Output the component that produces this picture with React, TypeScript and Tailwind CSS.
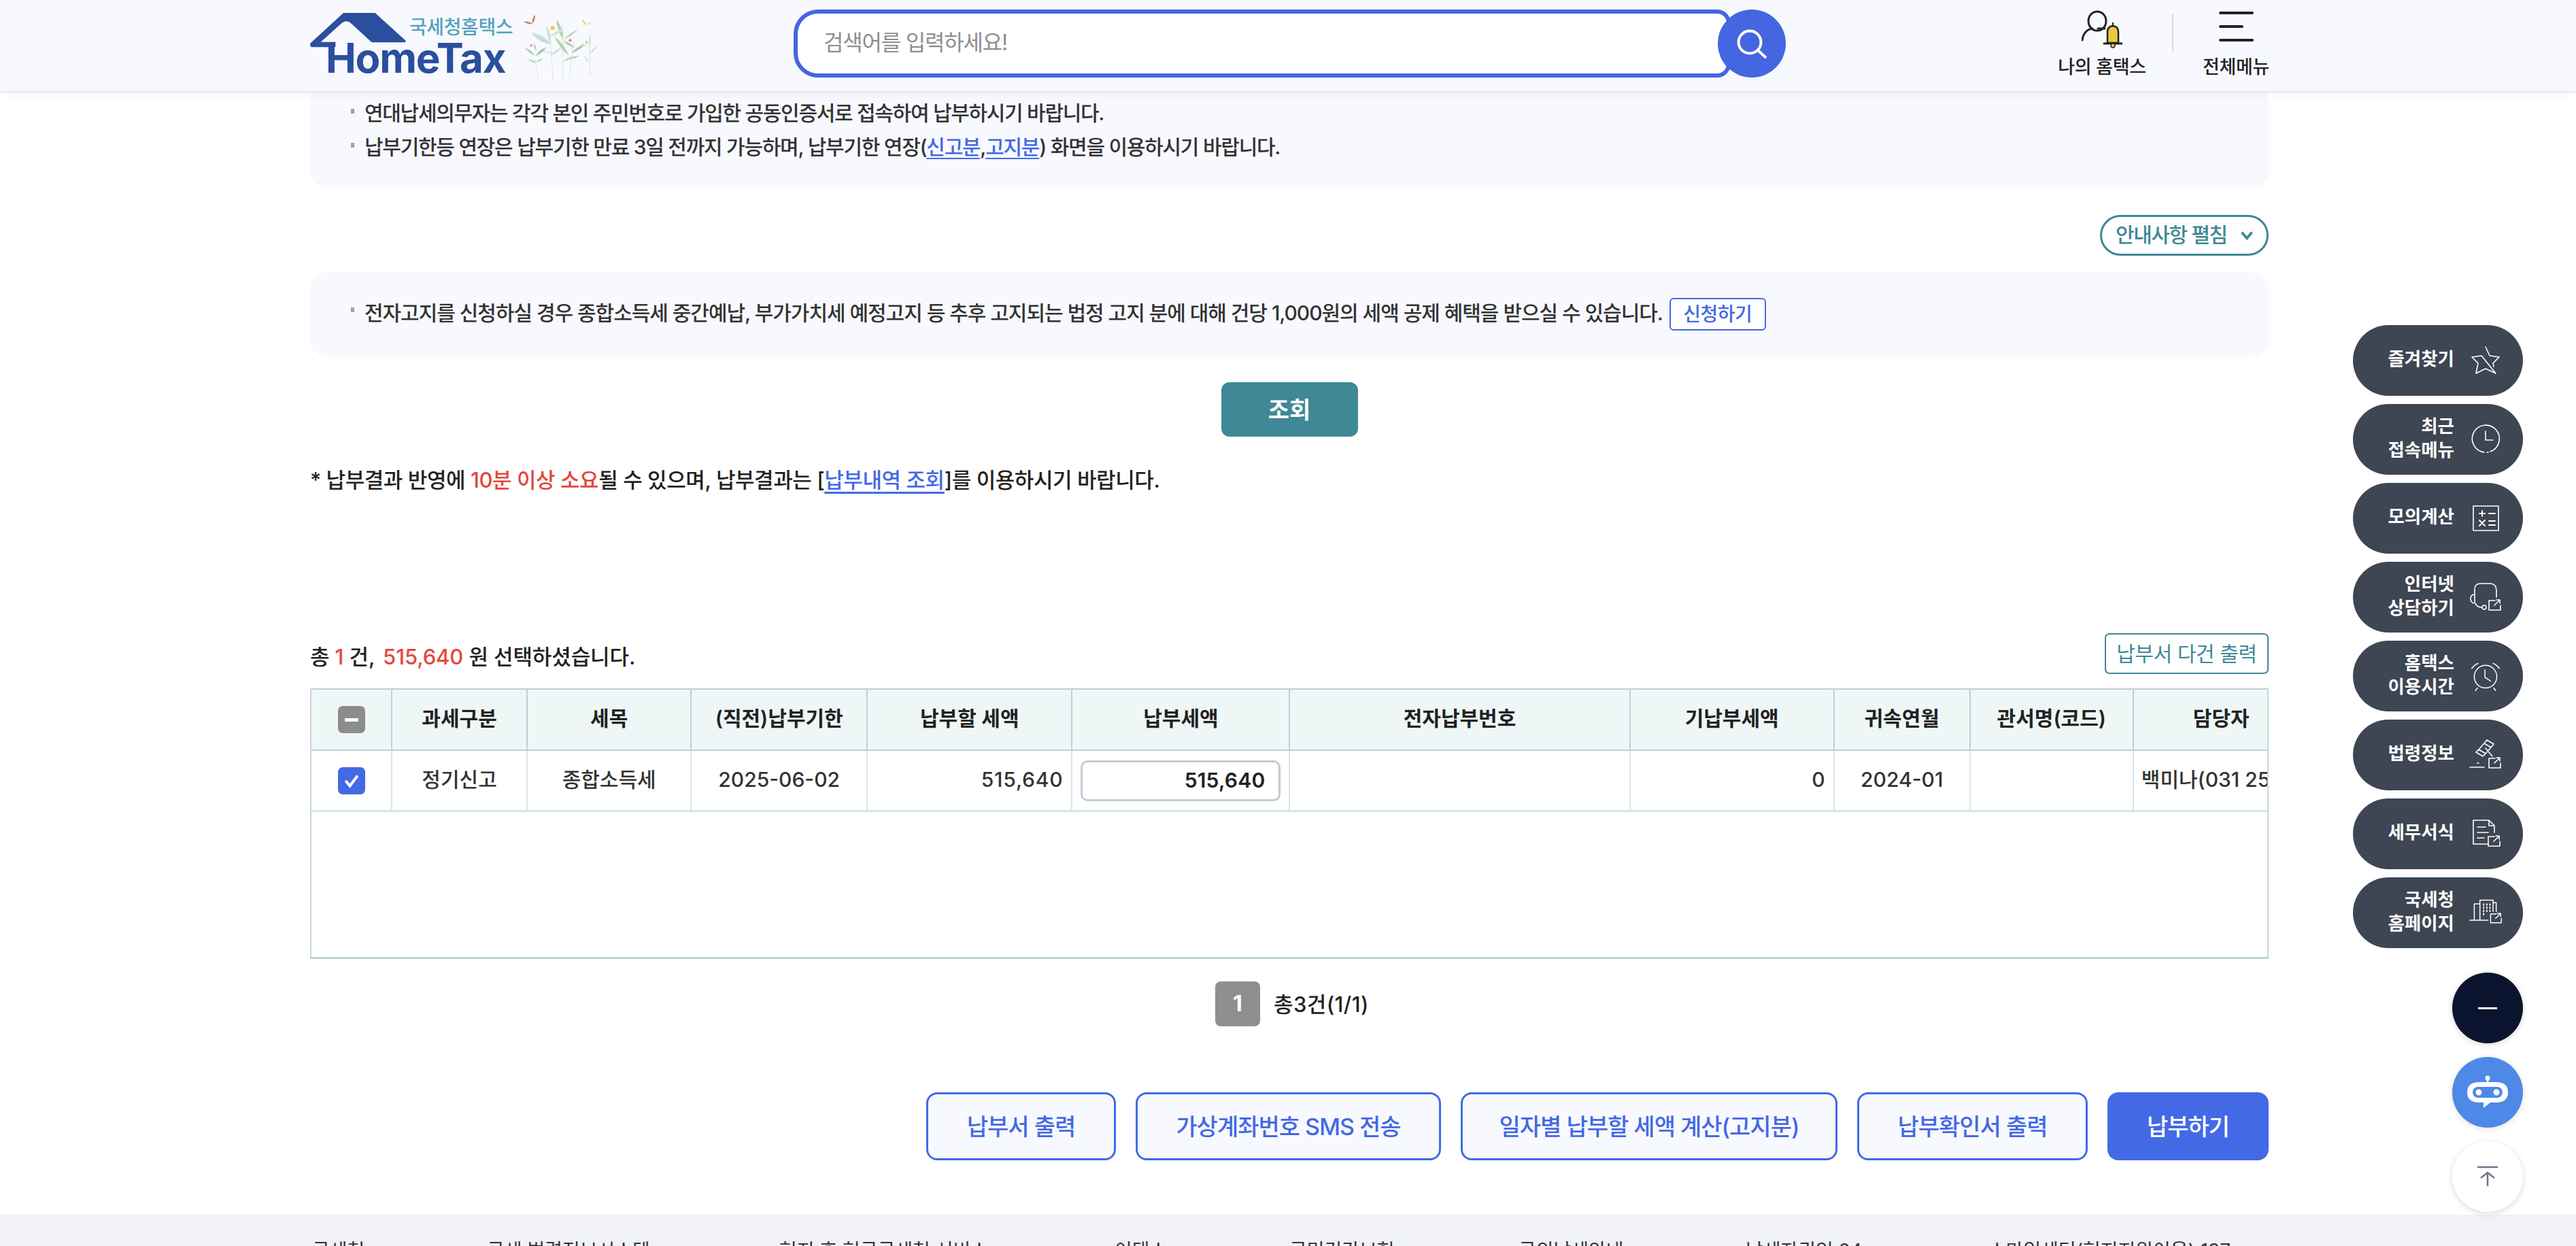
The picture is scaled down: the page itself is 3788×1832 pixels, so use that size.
import React from "react";

const FONT = "font-['Inter','Noto_Sans_CJK_KR','Noto_Sans',sans-serif]";

function Leaf({ a, b, w = 16, fill }: { a: [number, number]; b: [number, number]; w?: number; fill: string }) {
  const mx = (a[0] + b[0]) / 2;
  const my = (a[1] + b[1]) / 2;
  const dx = b[0] - a[0];
  const dy = b[1] - a[1];
  const len = Math.hypot(dx, dy) || 1;
  const px = (-dy / len) * w;
  const py = (dx / len) * w;
  return <path d={`M${a[0]} ${a[1]} Q${mx + px} ${my + py} ${b[0]} ${b[1]} Q${mx - px} ${my - py} ${a[0]} ${a[1]}Z`} fill={fill} />;
}

function Logo() {
  return (
    <div className="relative w-[424px] h-[100px] shrink-0">
      <svg viewBox="18 27 1272 300" className="absolute left-0 top-0 w-[424px] h-[100px]">
        <path d="M165 27 H305 L438 148 Q443 157 435 157 H290 L195 70 Q178 58 160 70 L65 155 H130 V178 H24 Q12 168 22 158 Z" fill="#2b4f9e" />
        <path d="M1010 230 L1025 320 M1075 100 L1090 325 M1132 70 V325 M1180 150 L1162 310 M1250 150 L1255 305" stroke="#d5e6df" strokeWidth="3" fill="none" />
        <Leaf a={[995, 115]} b={[1080, 165]} w={22} fill="#c3e0da" />
        <Leaf a={[1060, 80]} b={[1080, 165]} w={14} fill="#cbe3df" />
        <Leaf a={[1105, 55]} b={[1135, 145]} w={16} fill="#b7d4a8" />
        <Leaf a={[1140, 95]} b={[1070, 135]} w={12} fill="#cfe6e1" />
        <Leaf a={[1200, 100]} b={[1135, 145]} w={10} fill="#c4dcb0" />
        <Leaf a={[1095, 130]} b={[1160, 215]} w={14} fill="#b5d4a0" />
        <Leaf a={[1135, 150]} b={[1185, 180]} w={10} fill="#a6d0ad" />
        <Leaf a={[1230, 165]} b={[1170, 205]} w={12} fill="#9fcfa8" />
        <Leaf a={[1130, 180]} b={[1080, 212]} w={10} fill="#cfe5de" />
        <Leaf a={[1030, 190]} b={[1105, 210]} w={8} fill="#d3e8e2" />
        <Leaf a={[1060, 178]} b={[1012, 218]} w={11} fill="#9cc9a5" />
        <Leaf a={[965, 180]} b={[1010, 215]} w={9} fill="#a9d0a8" />
        <Leaf a={[1005, 160]} b={[1015, 195]} w={7} fill="#a9d0a8" />
        <Leaf a={[980, 232]} b={[1015, 248]} w={7} fill="#a9d0b0" />
        <Leaf a={[1045, 228]} b={[1015, 245]} w={6} fill="#a9d0b0" />
        <Leaf a={[1180, 220]} b={[1135, 240]} w={8} fill="#bcd7a8" />
        <Leaf a={[1205, 215]} b={[1165, 230]} w={6} fill="#a6d0ad" />
        <Leaf a={[1255, 120]} b={[1250, 180]} w={10} fill="#d0e6e1" />
        <Leaf a={[1205, 155]} b={[1250, 180]} w={5} fill="#d0e6e1" />
        <Leaf a={[1290, 165]} b={[1250, 210]} w={8} fill="#d0e6e1" />
        <Leaf a={[1225, 215]} b={[1250, 248]} w={7} fill="#d0e6e1" />
        <Leaf a={[960, 65]} b={[1000, 76]} w={8} fill="#cf7f5c" />
        <Leaf a={[1011, 35]} b={[998, 74]} w={9} fill="#cf7f5c" />
        <Leaf a={[1218, 55]} b={[1236, 82]} w={6} fill="#ecc84c" />
        <Leaf a={[1258, 66]} b={[1238, 81]} w={4} fill="#ecc84c" />
        <circle cx="1088" cy="93" r="9" fill="#edc84a" />
        <circle cx="1165" cy="148" r="6" fill="#d9835a" />
        <circle cx="993" cy="170" r="6" fill="#c9a9c9" />
        <circle cx="1238" cy="157" r="6" fill="#edd04a" />
      </svg>
      <span className="absolute left-[146px] top-[6px] text-[28px] leading-[30px] font-medium tracking-[-0.4px] text-[#54a2bd]">국세청홈택스</span>
      <span className="absolute left-[23px] top-[36px] text-[60px] leading-[60px] font-bold tracking-[-1.2px] text-[#2b4f9e]">HomeTax</span>
    </div>
  );
}

function SearchBar() {
  return (
    <div className="ml-[287px] mt-[-4px] flex items-center">
      <div className="w-[1378px] h-[100px] border-[6px] border-[#4466e0] rounded-l-[36px] rounded-r-[20px] bg-white flex items-center pl-[38px] text-[32px] tracking-[-1.2px] text-[#8e8e8e]">
        <span className="-mt-[2px]">검색어를 입력하세요!</span>
      </div>
      <div className="-ml-[19px] relative w-[100px] h-[100px] rounded-full bg-[#4466e0]">
        <svg viewBox="0 0 100 100" className="w-[100px] h-[100px]" fill="none" stroke="#fff" strokeWidth="4">
          <circle cx="47" cy="48" r="16.5" />
          <path d="M59 60 L71 71" />
        </svg>
      </div>
    </div>
  );
}

function Header() {
  return (
    <header className="relative z-10 h-[136px] bg-[#f8f9fe] border-b-[2px] border-[#e4e4ea] shadow-[0_4px_12px_rgba(0,0,0,0.03)] flex items-center pl-[456px] pb-[2px]">
      <div className="mt-[6px]"><Logo /></div>
      <SearchBar />
      <div className="flex items-start ml-auto mr-[452px] pb-[2px]">
        <div className="flex flex-col items-center w-[130px]">
          <svg viewBox="0 0 60 56" className="w-[60px] h-[56px]" fill="none">
            <ellipse cx="23" cy="16" rx="13" ry="14" stroke="#222" strokeWidth="3" />
            <path d="M1 44 C2 34 8 28 16 27 M24 27 L34 27" stroke="#222" strokeWidth="3" strokeLinecap="round" />
            <path d="M38 48 V32 Q38 24 46 23 Q54 24 54 32 V48 Z" fill="#ecc93d" stroke="#222" strokeWidth="2.5" />
            <path d="M33 49 H59" stroke="#222" strokeWidth="3" strokeLinecap="round" />
            <circle cx="46" cy="52" r="3" fill="#ecc93d" stroke="#222" strokeWidth="1.5" />
            <path d="M46 18 V23" stroke="#222" strokeWidth="2" />
          </svg>
          <span className="mt-[12px] text-[27px] leading-[32px] tracking-[-0.3px] text-[#222] whitespace-nowrap font-medium">나의 홈택스</span>
        </div>
        <div className="w-[2px] h-[54px] bg-[#d6d6dc] ml-[38px] mt-[6px]" />
        <div className="flex flex-col items-center ml-[44px] w-[96px]">
          <div className="w-[51px] h-[44px] mt-[2px] flex flex-col justify-between">
            <div className="h-[4px] w-[51px] bg-[#222] rounded-full" />
            <div className="h-[4px] w-[36px] bg-[#222] rounded-full" />
            <div className="h-[4px] w-[51px] bg-[#222] rounded-full" />
          </div>
          <span className="mt-[22px] text-[27px] leading-[32px] tracking-[-0.3px] text-[#222] whitespace-nowrap font-medium">전체메뉴</span>
        </div>
      </div>
    </header>
  );
}

const A = ({ children }: { children: React.ReactNode }) => (
  <span className="text-[#4469e5] underline underline-offset-[5px] decoration-[2px]">{children}</span>
);

const cols = [119, 199, 241, 259, 301, 320, 500, 300, 200, 240, 400];
const heads = ["", "과세구분", "세목", "(직전)납부기한", "납부할 세액", "납부세액", "전자납부번호", "기납부세액", "귀속연월", "관서명(코드)", "담당자"];
const thBase = "h-[92px] border-y-[2px] border-r-[2px] border-[#b9d2d9] text-[30px] font-semibold text-[#222]";
const tdBase = "h-[90px] border-b-[3px] border-r-[2px] border-b-[#d2e5ea] border-r-[#d5e6ea]";

function PayTable() {
  return (
    <div className="mt-[21px] h-[398px] border-x-[2px] border-b-[3px] border-x-[#c4d9de] border-b-[#b9d2d9] overflow-hidden">
      <table className="table-fixed border-separate border-spacing-0 w-[3080px]">
        <colgroup>
          {cols.map((w, i) => <col key={i} style={{ width: w }} />)}
        </colgroup>
        <thead>
          <tr className="bg-[#eef7f6]">
            {heads.map((h, i) => (
              <th key={i} className={`${thBase} ${i === 10 ? "text-left pl-[87px]" : "text-center"}`}>
                {i === 0 ? (
                  <span className="mx-auto flex w-[40px] h-[40px] rounded-[7px] bg-[#8c8c8c] items-center justify-center">
                    <span className="w-[20px] h-[5px] bg-white" />
                  </span>
                ) : <span className="block -mt-[3px]">{h}</span>}
              </th>
            ))}
          </tr>
        </thead>
        <tbody>
          <tr className="text-[30px] text-[#333] font-medium">
            <td className={tdBase}>
              <span className="mx-auto flex w-[40px] h-[40px] rounded-[7px] bg-[#4469e5] items-center justify-center">
                <svg viewBox="0 0 24 24" className="w-[30px] h-[30px]" fill="none" stroke="#fff" strokeWidth="3.2"><path d="M5 12 L10 18 L19 6" /></svg>
              </span>
            </td>
            <td className={`${tdBase} text-center`}><span className="block -mt-[2px]">정기신고</span></td>
            <td className={`${tdBase} text-center`}><span className="block -mt-[2px]">종합소득세</span></td>
            <td className={`${tdBase} text-center`}><span className="block -mt-[2px]">2025-06-02</span></td>
            <td className={`${tdBase} text-right pr-[12px] tracking-[0.8px]`}><span className="block -mt-[2px]">515,640</span></td>
            <td className={`${tdBase} px-[12px]`}>
              <div className="h-[60px] border-[3px] border-[#c8c8d8] rounded-[10px] flex items-center justify-end pr-[20px] font-semibold text-[#222] tracking-[0.2px]">515,640</div>
            </td>
            <td className={tdBase} />
            <td className={`${tdBase} text-right pr-[12px]`}><span className="block -mt-[2px]">0</span></td>
            <td className={`${tdBase} text-center`}><span className="block -mt-[2px]">2024-01</span></td>
            <td className={tdBase} />
            <td className="h-[90px] border-b-[3px] border-b-[#d2e5ea] pl-[11px] whitespace-nowrap"><span className="block -mt-[2px]">백미나(031 250-1234)</span></td>
          </tr>
        </tbody>
      </table>
    </div>
  );
}

const strokeProps = { fill: "none", stroke: "#fff", strokeWidth: 1.6, strokeLinecap: "round" as const, strokeLinejoin: "round" as const };

const IconStar = () => (
  <svg viewBox="0 0 48 48" className="w-[48px] h-[48px]" {...strokeProps}>
    <path d="M24 4 L30 17 L44 19 L35 28 L36 33 M39 43 L24 36 L10 43 L13 28 L4 19 L18 17 Z" />
  </svg>
);
const IconClock = () => (
  <svg viewBox="0 0 48 48" className="w-[48px] h-[48px]" {...strokeProps}>
    <path d="M22 43 A20 20 0 1 1 31 42 M26 43 L28 43" />
    <path d="M24 12 V25 H35" />
  </svg>
);
const IconCalc = () => (
  <svg viewBox="0 0 48 48" className="w-[48px] h-[48px]" {...strokeProps}>
    <path d="M6 6 H43 V42 H6 Z" />
    <path d="M15 17 H23 M19 13 V21 M29 17 H38 M15 27 L23 35 M23 27 L15 35 M29 28 H38 M29 34 H38" strokeWidth="2" />
  </svg>
);
const OpenBox = ({ x, y }: { x: number; y: number }) => (
  <g transform={`translate(${x} ${y})`}>
    <path d="M9 2 H0 V16 H17 V9 M8 9 L16 1 M11 1 H16 V6" />
  </g>
);
const IconChat = () => (
  <svg viewBox="-2 -2 48 48" className="w-[48px] h-[48px]" {...strokeProps}>
    <path d="M6 30 V10 Q6 2 15 2 H30 Q38 3 38 13 V22" />
    <path d="M5 18 Q0 19 0 24 Q0 30 5 31 M7 31 Q9 37 17 37" />
    <circle cx="20" cy="37" r="3" />
    <OpenBox x={27} y={25} />
  </svg>
);
const IconAlarm = () => (
  <svg viewBox="0 0 52 48" className="w-[52px] h-[48px]" {...strokeProps}>
    <circle cx="26" cy="25" r="18" />
    <path d="M25 14 V26 L34 32 M4 12 Q8 6 14 4 M48 12 Q44 6 38 4 M13 43 L10 47 M39 43 L42 47" />
  </svg>
);
const IconLaw = () => (
  <svg viewBox="0 0 48 48" className="w-[48px] h-[48px]" {...strokeProps}>
    <path d="M26 2 L36 8 L32 13 L22 7 Z M14 16 L24 22 L20 26 L10 20 Z M21 8 L14 16 M31 14 L24 22 M24 14 L34 26" />
    <path d="M1 42 H22 M12 36 H14" />
    <OpenBox x={29} y={27} />
  </svg>
);
const IconDoc = () => (
  <svg viewBox="0 0 48 48" className="w-[48px] h-[48px]" {...strokeProps}>
    <path d="M28 39 H6 V4 H29 L37 12 V22 M29 4 V12 H37 M12 14 H24 M12 22 H28 M12 30 H22" />
    <OpenBox x={28} y={26} />
  </svg>
);
const IconBuilding = () => (
  <svg viewBox="0 0 52 48" className="w-[52px] h-[48px]" {...strokeProps}>
    <path d="M1 36 H30 M8 36 V10 H17 M17 36 V4 H38 L38 6 V22 M38 8 H43 V22" />
    <path d="M23 10 V30 M28 10 V24 M33 10 V22" strokeDasharray="2 3" strokeWidth="2" />
    <OpenBox x={34} y={24} />
  </svg>
);

function Pill({ lines, icon }: { lines: string[]; icon: React.ReactNode }) {
  return (
    <div className="h-[104px] w-[250px] rounded-[52px] bg-[#3e4553] flex items-center pl-[53px] text-white">
      <div className="w-[96px] flex flex-col items-end text-[26.5px] leading-[35px] font-semibold whitespace-nowrap pb-[5px]">
        {lines.map((l) => <span key={l}>{l}</span>)}
      </div>
      <div className="w-[48px] ml-[22px] flex items-center justify-center">{icon}</div>
    </div>
  );
}

function Rail() {
  const items: { lines: string[]; icon: React.ReactNode }[] = [
    { lines: ["즐겨찾기"], icon: <IconStar /> },
    { lines: ["최근", "접속메뉴"], icon: <IconClock /> },
    { lines: ["모의계산"], icon: <IconCalc /> },
    { lines: ["인터넷", "상담하기"], icon: <IconChat /> },
    { lines: ["홈택스", "이용시간"], icon: <IconAlarm /> },
    { lines: ["법령정보"], icon: <IconLaw /> },
    { lines: ["세무서식"], icon: <IconDoc /> },
    { lines: ["국세청", "홈페이지"], icon: <IconBuilding /> },
  ];
  return (
    <aside className="absolute z-20 left-[3460px] top-[478px] w-[250px] flex flex-col gap-[12px]">
      {items.map((it) => <Pill key={it.lines.join("")} {...it} />)}
      <div className="flex flex-col items-end gap-[20px] mt-[24px]">
        <div className="w-[104px] h-[104px] rounded-full bg-[#0b142e] shadow-[0_2px_10px_rgba(0,0,0,0.15)] flex items-center justify-center">
          <span className="w-[28px] h-[3px] bg-white" />
        </div>
        <div className="w-[104px] h-[104px] rounded-full bg-[#4e89e8] shadow-[0_2px_10px_rgba(0,0,0,0.12)] flex items-center justify-center">
          <svg viewBox="0 0 60 50" className="w-[60px] h-[50px]">
            <circle cx="30" cy="4" r="3.5" fill="#fff" />
            <path d="M30 6 V12" stroke="#fff" strokeWidth="3" />
            <path d="M18 10 H42 Q60 10 60 25 Q60 40 42 40 H34 L24 48 V40 H18 Q0 40 0 25 Q0 10 18 10 Z" fill="#fff" />
            <rect x="8" y="17" width="44" height="16" rx="8" fill="#4e89e8" />
            <circle cx="17" cy="25" r="4.5" fill="#fff" />
            <circle cx="43" cy="25" r="4.5" fill="#fff" />
          </svg>
        </div>
        <div className="w-[104px] h-[104px] rounded-full bg-white shadow-[0_2px_10px_rgba(0,0,0,0.15)] flex items-center justify-center">
          <svg viewBox="0 0 32 32" className="w-[32px] h-[32px]" fill="none" stroke="#71738a" strokeWidth="2.5">
            <path d="M1 2 H31 M16 30 V10 M6 18 L16 10 L26 18" />
          </svg>
        </div>
      </div>
    </aside>
  );
}

const footerItems = [
  "국세청",
  "국세 법령정보시스템",
  "현지 후 현금국세청 서비스",
  "이택스",
  "국민건강보험",
  "국외납세안내",
  "납세자권익 24",
  "스마일센터(현지지원이용) 137",
];

const bulletText = "flex items-start h-[50px] text-[30px] leading-[50px] text-[#333] font-medium whitespace-nowrap";
const bulletDot = "w-[5px] h-[7px] bg-[#a0a0a0] mt-[19px] mr-[15px] shrink-0";

export default function App() {
  return (
    <div className={`relative w-[3788px] h-[1832px] overflow-hidden bg-white ${FONT}`}>
      <Header />
      <main className="ml-[456px] w-[2880px]">
        <ul className="bg-[#f8f9fe] rounded-b-[24px] h-[140px] pl-[60px] pt-[5px]">
          <li className={`${bulletText} tracking-[-1.3px]`}>
            <span className={bulletDot} />
            <span>연대납세의무자는 각각 본인 주민번호로 가입한 공동인증서로 접속하여 납부하시기 바랍니다.</span>
          </li>
          <li className={`${bulletText} tracking-[-1.26px]`}>
            <span className={bulletDot} />
            <span>납부기한등 연장은 납부기한 만료 3일 전까지 가능하며, 납부기한 연장(<A>신고분</A>,<A>고지분</A>) 화면을 이용하시기 바랍니다.</span>
          </li>
        </ul>
        <div className="mt-[40px] flex justify-end">
          <div className="w-[248px] h-[60px] rounded-full border-[3px] border-[#3f8896] flex items-center pl-[20px] text-[30px] tracking-[-1.4px] text-[#3f8896] font-medium">
            <span className="-mt-[2px]">안내사항 펼침</span>
            <svg viewBox="0 0 16 12" className="w-[20px] h-[15px] ml-auto mr-[19px]" fill="none" stroke="#3f8896" strokeWidth="3"><path d="M2 2 L8 9 L14 2" /></svg>
          </div>
        </div>
        <ul className="mt-[24px] h-[124px] bg-[#f8f9fe] rounded-[24px] pl-[60px] flex items-center">
          <li className="flex items-center text-[30px] text-[#333] font-medium whitespace-nowrap tracking-[-1.04px]">
            <span className="w-[5px] h-[7px] bg-[#a0a0a0] mr-[15px] -mt-[14px] shrink-0" />
            <span className="-mt-[4px]">전자고지를 신청하실 경우 종합소득세 중간예납, 부가가치세 예정고지 등 추후 고지되는 법정 고지 분에 대해 건당 1,000원의 세액 공제 혜택을 받으실 수 있습니다.</span>
            <span className="ml-[10px] w-[142px] h-[48px] rounded-[6px] border-[2px] border-[#4469e5] bg-white flex items-center justify-center text-[28px] tracking-[-0.5px] text-[#4469e5]">신청하기</span>
          </li>
        </ul>
        <div className="mt-[38px] flex justify-center">
          <div className="w-[201px] h-[80px] rounded-[12px] bg-[#3f8896] flex items-center justify-center text-[34px] text-white font-semibold">조회</div>
        </div>
        <p className="mt-[44px] h-[40px] leading-[40px] text-[31px] font-medium text-[#222] whitespace-nowrap tracking-[-0.42px]">
          * 납부결과 반영에 <span className="text-[#e2483d]">10분 이상 소요</span>될 수 있으며, 납부결과는 [<span className="text-[#4469e5] underline underline-offset-[6px] decoration-[3px]">납부내역 조회</span>]를 이용하시기 바랍니다.
        </p>
        <div className="mt-[205px] flex items-center justify-between h-[60px]">
          <p className="text-[31px] font-medium text-[#222] pt-[10px] tracking-[-0.1px]">
            총 <span className="text-[#e2483d]">1</span> 건, <span className="ml-[4px] text-[#e2483d]">515,640</span> 원 선택하셨습니다.
          </p>
          <div className="w-[241px] h-[60px] rounded-[7px] border-[2px] border-[#3f8896] flex items-center justify-center text-[30px] tracking-[-0.4px] text-[#3f8896]">납부서 다건 출력</div>
        </div>
        <PayTable />
        <div className="mt-[33px] ml-[1331px] flex items-center">
          <span className="w-[66px] h-[66px] rounded-[8px] bg-[#8f8f8f] flex items-center justify-center text-white text-[32px] font-bold">1</span>
          <span className="ml-[20px] text-[31px] font-medium text-[#222] mt-[2px] tracking-[0.4px]">총3건(1/1)</span>
        </div>
        <div className="mt-[97px] flex justify-end gap-[29px]">
          {[["납부서 출력", "w-[279px]"], ["가상계좌번호 SMS 전송", "w-[449px]"], ["일자별 납부할 세액 계산(고지분)", "w-[554px]"], ["납부확인서 출력", "w-[339px]"]].map(([t, w]) => (
            <div key={t} className={`${w} h-[100px] rounded-[16px] border-[3px] border-[#4469e5] bg-[#f8f9fe] flex items-center justify-center text-[34px] tracking-[-1px] font-medium text-[#4469e5]`}>{t}</div>
          ))}
          <div className="w-[237px] h-[100px] rounded-[16px] bg-[#4469e5] flex items-center justify-center text-[34px] tracking-[-1px] font-medium text-white">납부하기</div>
        </div>
      </main>
      <footer className="mt-[80px] h-[200px] bg-[#f0f2f7] pt-[35px] pl-[459px] text-[28px] leading-[36px] text-[#333]">
        <div className="grid grid-cols-[257px_430px_493px_257px_337px_334px_357px_auto] w-[2877px] whitespace-nowrap">
          {footerItems.map((t) => <span key={t}>{t}</span>)}
        </div>
      </footer>
      <Rail />
    </div>
  );
}
